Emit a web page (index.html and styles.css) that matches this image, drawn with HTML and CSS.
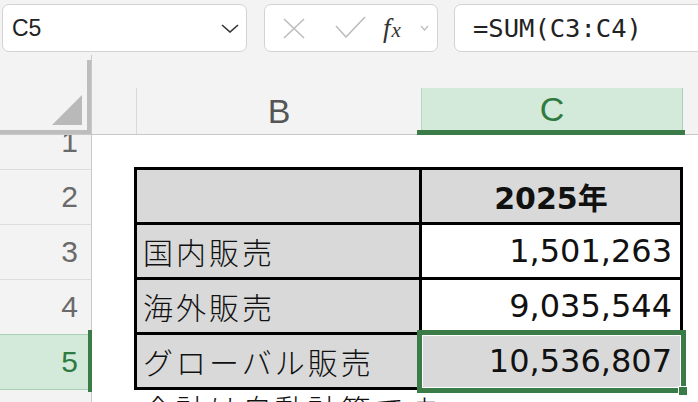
FILE: index.html
```html
<!DOCTYPE html>
<html lang="ja">
<head>
<meta charset="utf-8">
<title>Sheet</title>
<link rel="stylesheet" href="styles.css">
</head>
<body>
<div class="topbar">
  <div class="namebox">
    <span class="ref">C5</span>
    <svg class="chev" width="18" height="9" viewBox="0 0 18 9"><polyline points="1,1 9,8 17,1" fill="none" stroke="#333" stroke-width="1.6"/></svg>
  </div>
  <div class="fnbox">
    <svg class="ico-x" width="22" height="21" viewBox="0 0 22 21"><path d="M1 1 L21 20 M21 1 L1 20" stroke="#bdbdbd" stroke-width="1.6" fill="none"/></svg>
    <svg class="ico-check" width="31" height="22" viewBox="0 0 31 22"><polyline points="1,10 11,21 30,1" fill="none" stroke="#bdbdbd" stroke-width="1.6"/></svg>
    <span class="fx"><span class="fx-f">f</span><span class="fx-x">x</span></span>
    <svg class="ico-dd" width="9" height="6" viewBox="0 0 9 6"><polyline points="1,1 4.5,5 8,1" fill="none" stroke="#bdbdbd" stroke-width="1.2"/></svg>
  </div>
  <div class="formula">=SUM(C3:C4)</div>
</div>

<div class="colhead">
  <div class="corner">
    <div class="corner-frame">
      <svg class="tri" width="30" height="30" viewBox="0 0 30 30"><polygon points="30,0 30,30 0,30" fill="#b9b9b9"/></svg>
    </div>
  </div>
  <div class="cols">
    <div class="col col-a"></div>
    <div class="col col-b">B</div>
    <div class="col col-c">C</div>
  </div>
</div>

<div class="sheet">
  <div class="rowheads">
    <div class="rh rh-first"><span>1</span></div>
    <div class="rh">2</div>
    <div class="rh">3</div>
    <div class="rh">4</div>
    <div class="rh rh-sel">5</div>
    <div class="rh">6</div>
  </div>
  <div class="cells">
    <div class="table">
      <div class="cell gray"></div>
      <div class="cell gray head">2025年</div>
      <div class="cell gray label">国内販売</div>
      <div class="cell num">1,501,263</div>
      <div class="cell gray label">海外販売</div>
      <div class="cell num">9,035,544</div>
      <div class="cell gray label">グローバル販売</div>
      <div class="cell gray num selected">10,536,807</div>
    </div>
    <div class="below">合計は自動計算です</div>
  </div>
</div>
</body>
</html>
```

FILE: styles.css
```css
html, body {
  margin: 0;
  padding: 0;
}
body {
  width: 698px;
  height: 402px;
  overflow: hidden;
  background: #f3f3f3;
  font-family: "Liberation Sans", Arial, sans-serif;
}

/* ---------- top bar ---------- */
.topbar {
  display: flex;
  align-items: flex-start;
  height: 55px;
  box-sizing: border-box;
  padding: 4px 0 0 2px;
}
.namebox {
  flex: none;
  width: 245px;
  height: 48px;
  box-sizing: border-box;
  background: #fff;
  border: 1px solid #d3d3d3;
  border-radius: 7px;
  display: flex;
  align-items: center;
  justify-content: space-between;
  padding: 0 7px 0 9px;
}
.ref {
  font-size: 23px;
  color: #222;
}
.chev {
  display: block;
}
.fnbox {
  flex: none;
  margin-left: 17px;
  width: 174px;
  height: 48px;
  box-sizing: border-box;
  background: #fff;
  border: 1px solid #d3d3d3;
  border-radius: 7px;
  display: flex;
  align-items: center;
  padding-left: 18px;
}
.fnbox svg {
  display: block;
}
.ico-check {
  margin-left: 30px;
  margin-top: -2px;
}
.fx {
  margin-left: 17px;
  display: flex;
  align-items: baseline;
  color: #333;
  width: 26px;
}
.fx-f {
  font-family: "Liberation Serif", serif;
  font-style: italic;
  font-size: 27px;
}
.fx-x {
  font-family: "Liberation Serif", serif;
  font-style: italic;
  font-size: 21px;
  margin-left: 1px;
}
.ico-dd {
  margin-left: 11px;
}
.formula {
  flex: none;
  margin-left: 16px;
  width: 300px;
  height: 48px;
  box-sizing: border-box;
  background: #fff;
  border: 1px solid #d3d3d3;
  border-radius: 7px;
  padding-left: 18px;
  display: flex;
  align-items: center;
  font-family: "DejaVu Sans Mono", "Liberation Mono", monospace;
  font-size: 25.5px;
  color: #222;
}

/* ---------- column header ---------- */
.colhead {
  display: flex;
  height: 80px;
}
.corner {
  flex: none;
  width: 92px;
  height: 80px;
  box-sizing: border-box;
  padding-top: 5px;
  border-right: 1px solid #c9c9c9;
  border-bottom: 1px solid #c9c9c9;
}
.corner-frame {
  width: 91px;
  height: 74px;
  box-sizing: border-box;
  border-right: 4px solid #bdbdbd;
  border-bottom: 4px solid #bdbdbd;
  display: flex;
  justify-content: flex-end;
  align-items: flex-end;
  padding: 0 5px 5px 0;
}
.tri {
  display: block;
}
.cols {
  flex: 1;
  display: flex;
  height: 80px;
  box-sizing: border-box;
  padding-top: 33px;
  border-bottom: 1px solid #c9c9c9;
}
.col {
  flex: none;
  height: 46px;
  box-sizing: border-box;
  display: flex;
  align-items: center;
  justify-content: center;
  font-size: 34px;
  color: #555;
}
.col-a {
  width: 44px;
}
.col-b {
  width: 285px;
  border-left: 1px solid #d9d9d9;
}
.col-c {
  width: 262px;
  position: relative;
  background: #d3e9d9;
  border-left: 1px solid #b5d9c0;
  border-right: 1px solid #a9d1b6;
  color: #2e7a40;
  height: 42px;
  align-self: flex-start;
}
.col-c::after {
  content: "";
  position: absolute;
  left: -5px;
  right: -3px;
  bottom: -5px;
  height: 5px;
  background: #3b7b48;
}

/* ---------- sheet body ---------- */
.sheet {
  display: flex;
  height: 267px;
}
.rowheads {
  flex: none;
  width: 92px;
  box-sizing: border-box;
  border-right: 1px solid #c9c9c9;
  background: #f3f3f3;
}
.rh {
  position: relative;
  height: 55px;
  box-sizing: border-box;
  border-bottom: 1px solid #dcdcdc;
  display: flex;
  align-items: center;
  justify-content: flex-end;
  padding-right: 13px;
  font-size: 30px;
  color: #6a6a6a;
}
.rh-first {
  height: 35px;
  overflow: hidden;
  align-items: flex-end;
}
.rh-first span {
  display: block;
  height: 56px;
  line-height: 58px;
}
.rh-sel {
  background: #d3e9d9;
  color: #2e7a40;
  border-bottom-color: #a9d1b6;
  box-shadow: 0 -1px 0 #a9d1b6;
}
.rh-sel::after {
  content: "";
  position: absolute;
  right: -1px;
  top: -5px;
  bottom: -3px;
  width: 4px;
  background: #3b7b48;
}
.cells {
  flex: 1;
  background: #fff;
  padding: 32px 0 0 42px;
  overflow: hidden;
}
.table {
  display: grid;
  grid-template-columns: 282px 258px;
  grid-auto-rows: 52px;
  gap: 3px;
  padding: 3px;
  background: #000;
  width: max-content;
}
.cell {
  background: #fff;
  display: flex;
  align-items: center;
  box-sizing: border-box;
  color: #111;
  position: relative;
}
.cell.gray {
  background: #d9d9d9;
}
.label {
  padding-left: 6px;
  font-family: "Noto Sans CJK JP", sans-serif;
  font-weight: 300;
  font-size: 30px;
  letter-spacing: 3px;
}
.num {
  justify-content: flex-end;
  padding-right: 8px;
  font-family: "DejaVu Sans", "Noto Sans CJK JP", sans-serif;
  font-size: 32px;
}
.head {
  justify-content: center;
  font-family: "DejaVu Sans", "Noto Sans CJK JP", sans-serif;
  font-weight: bold;
  font-size: 30px;
}
.selected::before {
  content: "";
  position: absolute;
  left: -5px;
  top: -5px;
  right: -6px;
  bottom: -6px;
  border: 5px solid #3b7b48;
  box-shadow: inset 0 0 0 1px #fff;
}
.selected::after {
  content: "";
  position: absolute;
  right: -8px;
  bottom: -9px;
  width: 8px;
  height: 8px;
  background: #3b7b48;
  border: 1px solid #fff;
}
.below {
  margin-top: 0;
  padding-left: 9px;
  font-family: "Noto Sans CJK JP", sans-serif;
  font-weight: 300;
  font-size: 30px;
  line-height: 36px;
  letter-spacing: 3px;
  color: #111;
}
```
